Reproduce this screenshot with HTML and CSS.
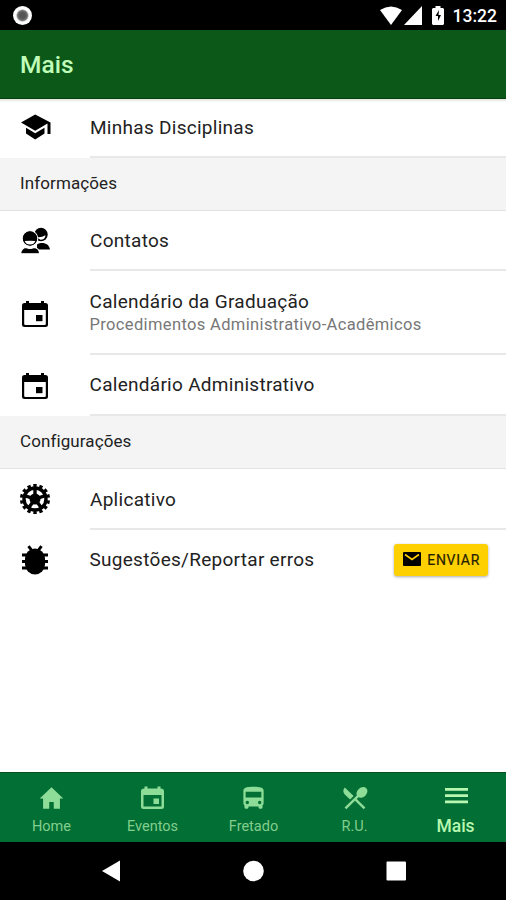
FILE: index.html
```html
<!DOCTYPE html>
<html lang="pt-BR">
<head>
<meta charset="utf-8">
<title>Mais</title>
<link rel="stylesheet" href="styles.css">
</head>
<body>
<svg class="defs" aria-hidden="true">
  <symbol id="calendar" viewBox="0 0 26 26"><path fill-rule="evenodd" d="M4 0h3v2h12V0h3v2h1.500Q26 2 26 4.500v19q0 2.500-2.500 2.500h-21Q0 26 0 23.500v-19Q0 2 2.500 2H4zM2.200 9v13.700q0 1.200 1.200 1.200h19.200q1.200 0 1.200-1.200V9z"/><path d="M14 14h6.500v6.200H14z"/></symbol>
</svg>
<div class="screen">
  <div class="status">
    <span class="record"></span>
    <div class="status-right">
      <svg class="wifi" viewBox="0 0 24 20"><path d="M1 4Q12-3 23 4L12 19z"/></svg>
      <svg class="signal" viewBox="0 0 18 19"><path d="M0 19L18 0V19z"/></svg>
      <svg class="battery" viewBox="0 0 12 19"><path d="M3.500 0h5v2H11l1 1v15l-1 1H1l-1-1V3l1-1h2.500z"/><path class="bolt" d="M7 4L3.500 10h2.500v5L9 9H6.500z"/></svg>
      <span class="clock">13:22</span>
    </div>
  </div>
  <header class="header"><h1>Mais</h1></header>
  <main class="list">
    <div class="item first">
      <svg class="icon" viewBox="0 0 30 30"><path d="M15.200 2.500L1 10.500l14.200 8.200 12.300-7.200V22h3V10.500zM6 15.800v5.600l9.200 6 9.300-6v-5.600l-9.300 5.500z"/></svg>
      <div class="body"><span>Minhas Disciplinas</span></div>
    </div>
    <h2 class="section">Informações</h2>
    <div class="item contacts">
      <svg class="icon" viewBox="0 0 30 30">
        <circle cx="21" cy="8.500" r="6.700"/><path d="M16 11q5 1 9.500-1.800c-.3 3-2 4.600-5 4.600z" fill="#fff"/><path d="M17 23.500v-5c5-3 12-1.500 13 5z"/>
        <g stroke="#fff" stroke-width="1.200"><circle cx="10" cy="12.500" r="7.700"/><path d="M.5 27.800c.7-5.200 3.500-6.200 5.500-6.400q4 2 8 0c3 .3 5 1.200 5.800 6.400z"/></g>
        <circle cx="10" cy="12.500" r="7.200"/><path d="M4.700 15q5.300-.5 10.600 0c-.8 2.400-2.500 3.600-5.300 3.600S5.500 17.400 4.700 15z" fill="#fff"/>
      </svg>
      <div class="body"><span>Contatos</span></div>
    </div>
    <div class="item double">
      <svg class="icon cal"><use href="#calendar"/></svg>
      <div class="body"><span>Calendário da Graduação</span><small>Procedimentos Administrativo-Acadêmicos</small></div>
    </div>
    <div class="item admin">
      <svg class="icon cal"><use href="#calendar"/></svg>
      <div class="body"><span>Calendário Administrativo</span></div>
    </div>
    <h2 class="section config">Configurações</h2>
    <div class="item app">
      <svg class="icon" viewBox="0 0 30 30">
        <circle cx="15" cy="15" r="11" fill="none" stroke="#000" stroke-width="3.400"/>
        <circle cx="15" cy="15" r="13.500" fill="none" stroke="#000" stroke-width="3.200" pathLength="28" stroke-dasharray="1.100 .9" transform="rotate(-97 15 15)"/>
        <circle cx="15" cy="15" r="5.500"/>
        <path d="M15 15V4M15 15l10.500-3.400M15 15l6.500 9M15 15l-6.500 9M15 15L4.500 11.600" stroke="#000" stroke-width="3.400"/>
      </svg>
      <div class="body"><span>Aplicativo</span></div>
    </div>
    <div class="item report">
      <svg class="icon" viewBox="0 0 30 30"><rect x="5" y="3.500" width="20" height="26" rx="10"/><path d="M8.500 1.200l3 4M21.500 1.200l-3 4M2 10H28M2 16.500H28M2 23H28" fill="none" stroke="#000" stroke-width="2.900"/></svg>
      <div class="body"><span>Sugestões/Reportar erros</span>
        <button class="send"><svg viewBox="0 0 18 14"><rect width="18" height="14" rx="1"/><path d="M2 2.500l7 5 7-5" fill="none" stroke="#ffd000" stroke-width="1.700"/></svg>ENVIAR</button>
      </div>
    </div>
  </main>
  <nav class="tabs">
    <div class="tab"><svg viewBox="0 0 24 24"><path d="M10 21v-6h4v6h5.500v-9h3L12 2 1.500 12h3v9z"/></svg><span>Home</span></div>
    <div class="tab"><svg viewBox="0 0 27 27"><path fill-rule="evenodd" d="M5.500 1.500h3v2h10v-2h3v2Q25 3.500 25 6v15.500q0 2.500-2.500 2.500h-18Q2 24 2 21.500V6q0-2.500 3.500-2.500zM4.500 10v11.500h18V10z"/><path d="M14.500 13.500h5.500v5.500h-5.500z"/></svg><span>Eventos</span></div>
    <div class="tab"><svg viewBox="0 0 24 24"><path d="M3 16c0 .88.39 1.670 1 2.220V20c0 .55.45 1 1 1h1.500c.55 0 1-.45 1-1v-1h9v1c0 .55.45 1 1 1H19c.55 0 1-.45 1-1v-1.780c.61-.55 1-1.340 1-2.220V5c0-3-3.580-3.500-9-3.500S3 2 3 5v11zm3.500 1c-.83 0-1.500-.67-1.500-1.500S5.670 14 6.500 14s1.500.67 1.500 1.500S7.330 17 6.500 17zm11 0c-.83 0-1.500-.67-1.500-1.500s.67-1.500 1.500-1.500 1.500.67 1.500 1.500-.67 1.500-1.500 1.500zm1.500-6H5V6h14v5z"/></svg><span>Fretado</span></div>
    <div class="tab"><svg viewBox="0 0 24 24"><path transform="translate(-1 -1.500) scale(1.120 1.080)" d="M8.100 13.340l2.830-2.830L3.910 3.500c-1.560 1.560-1.560 4.090 0 5.660l4.190 4.180zm6.780-1.810c1.530.71 3.680.21 5.270-1.380 1.910-1.910 2.280-4.650.81-6.120-1.460-1.460-4.200-1.100-6.120.81-1.590 1.590-2.090 3.740-1.380 5.270L3.700 19.870l1.410 1.410L12 14.410l6.880 6.880 1.410-1.410L13.410 13l1.470-1.470z"/></svg><span>R.U.</span></div>
    <div class="tab active"><svg viewBox="0 0 25 25"><path d="M2 3h23v2.800H2zM2 9.200h23V12H2zM2 15.500h23v2.800H2z"/></svg><span>Mais</span></div>
  </nav>
  <div class="navbar">
    <svg viewBox="0 0 20 22"><path d="M2 11L20 .5v21z"/></svg>
    <svg viewBox="0 0 20 22"><circle cx="10.500" cy="11" r="10.300"/></svg>
    <svg viewBox="0 0 20 22"><rect x=".5" y="1.500" width="19.500" height="19" rx="1"/></svg>
  </div>
</div>
</body>
</html>
```

FILE: styles.css
```css
* { box-sizing: border-box; }
body { margin: 0; font-family: Roboto, sans-serif; background: #fff; }
.defs { display: none; }
svg { overflow: visible; flex: none; }
.screen { width: 506px; height: 900px; display: flex; flex-direction: column; overflow: hidden; }

.status { height: 30px; flex: none; background: #000; display: flex; justify-content: space-between; align-items: center; padding: 1px 9px 0 13px; }
.record { width: 19px; height: 19px; border-radius: 50%; background: radial-gradient(circle, #555 0 3px, #777 5px, #fff 6.500px); }
.status-right { display: flex; align-items: center; color: #fff; fill: #fff; }
.wifi { width: 24px; height: 20px; }
.signal { width: 18px; height: 19px; margin-left: 1px; }
.battery { width: 12px; height: 19px; margin-left: 10px; }
.bolt { fill: #000; }
.clock { font-size: 17.500px; font-weight: 500; line-height: 20px; margin-left: 9px; }

.header { height: 69px; flex: none; background: #0c5819; border-bottom: 1px solid #06400c; padding: 1px 20px 0; display: flex; align-items: center; }
.header h1 { margin: 0; font-size: 24.500px; line-height: 30px; font-weight: 500; color: #c0fdb8; }

.list { flex: 1; }
.item { display: flex; align-items: center; padding-left: 20px; height: 60px; }
.icon { width: 30px; height: 30px; margin-right: 40px; }
.cal { width: 26px; height: 26px; margin: 2px 42px 0 2px; }
.body { flex: 1; align-self: stretch; display: flex; align-items: center; border-bottom: 2px solid #e8e8e8; color: #222; font-size: 19px; letter-spacing: .28px; line-height: 24px; white-space: nowrap; }
.first { height: 59px; box-shadow: inset 0 3px 2px -1px #e5e9e2; }
.first .icon { margin-top: -3px; }
.contacts .body { padding-top: 2px; }
.double { height: 84px; }
.double .body { flex-direction: column; align-items: flex-start; justify-content: center; padding-top: 1px; }
.double .body, .admin .body, .report .body { text-indent: -.5px; }
.double small { font-size: 16.500px; letter-spacing: .36px; line-height: 22px; color: #777; }
.admin { height: 61px; }
.admin .icon { margin-top: 0; }
.admin .body { padding-top: 1px; }
.section { margin: 0; height: 53px; background: #f4f4f4; border-bottom: 1px solid #e2e2e2; padding: 0 20px; font-size: 17px; font-weight: 400; letter-spacing: .1px; line-height: 50px; color: #222; }
.app { height: 61px; }
.app .icon { margin-top: -1px; }
.app .body { padding-top: 2px; }
.report { height: 60px; }
.report .body { border: 0; justify-content: space-between; padding-right: 18px; }
.send { width: 94px; height: 32px; border: 0; border-radius: 3px; background: #ffd000; box-shadow: 0 1px 3px #aaa; padding: 0 8px 0 9px; display: flex; align-items: center; justify-content: space-between; font: 400 14px/20px Roboto, sans-serif; letter-spacing: .7px; text-indent: 0; color: #252000; -webkit-text-stroke: .2px #252000; }
.send svg { width: 18px; height: 14px; margin-top: -3px; }

.tabs { height: 70px; flex: none; background: #026f34; border-top: 1px solid #045020; display: flex; padding: 0 0 0 1px; }
.tab { flex: 1; display: flex; flex-direction: column; align-items: center; padding-top: 12px; color: #81ce8d; fill: #8ddc97; font-size: 14.500px; line-height: 18px; }
.tab svg { width: 27px; height: 27px; margin-bottom: 6px; }
.active { color: #b8f7b0; fill: #b8f7b0; font-size: 17.500px; font-weight: 500; }
.tab.active svg { width: 25px; height: 25px; margin-bottom: 7px; }

.navbar { height: 58px; flex: none; background: #000; fill: #fff; display: flex; justify-content: space-between; align-items: center; padding: 0 100px; }
.navbar svg { width: 20px; height: 22px; }
```
